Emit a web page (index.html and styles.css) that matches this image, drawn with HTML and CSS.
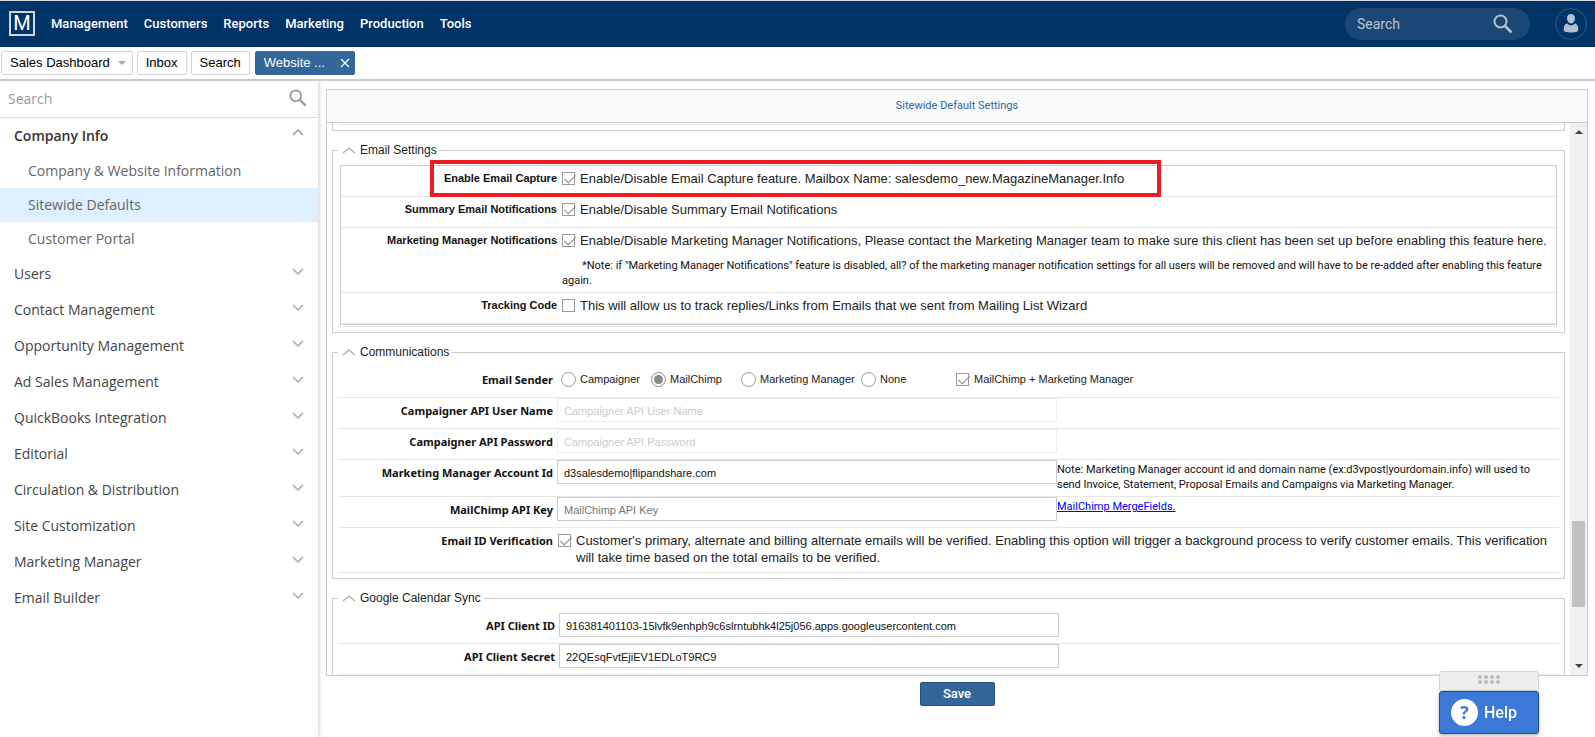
FILE: index.html
```html
<!DOCTYPE html>
<html lang="en">
<head>
<meta charset="utf-8">
<title>Sitewide Default Settings</title>
<link rel="stylesheet" href="styles.css">
</head>
<body>
<svg class="sprite" aria-hidden="true">
  <symbol id="magnifier" viewBox="0 0 20 20"><circle cx="7.5" cy="7.5" r="6" fill="none" stroke="currentColor" stroke-width="2"/><path d="M12 12l6.500 6.500" stroke="currentColor" stroke-width="2.500"/></symbol>
  <symbol id="down" viewBox="0 0 12 8"><path d="M1 1l5 5 5-5" fill="none" stroke="currentColor" stroke-width="1.800"/></symbol>
  <symbol id="up" viewBox="0 0 12 8"><path d="M1 7l5-5 5 5" fill="none" stroke="currentColor" stroke-width="1.800"/></symbol>
  <symbol id="peak" viewBox="0 0 14 8"><path d="M1 7l6-5 6 5" fill="none" stroke="currentColor" stroke-width="1.200"/></symbol>
</svg>

<header class="topbar">
  <a class="logo" href="#" aria-label="Home">M</a>
  <nav class="menu">
    <a href="#">Management</a><a href="#">Customers</a><a href="#">Reports</a><a href="#">Marketing</a><a href="#">Production</a><a href="#">Tools</a>
  </nav>
  <div class="top-search">
    <input type="text" placeholder="Search" aria-label="Search">
    <svg class="icon-20"><use href="#magnifier"/></svg>
  </div>
  <button class="avatar" aria-label="Account">
    <svg viewBox="0 0 16 20"><path d="M8 0c2.600 0 4.200 1.900 4 4.500C11.800 7.300 10.200 9.500 8 9.500S4.200 7.300 4 4.500C3.800 1.900 5.400 0 8 0z" fill="currentColor"/><path d="M4.300 9.500C5.500 10.800 6.600 11.300 8 11.300s2.500-.5 3.700-1.800C14 10 15.200 11.500 15.200 14v2.500c0 1-3 2-7.200 2s-7.200-1-7.200-2V14c0-2.500 1.200-4 3.500-4.500z" fill="currentColor"/></svg>
  </button>
</header>

<div class="tabs">
  <button class="tab">Sales Dashboard<span class="caret"></span></button>
  <button class="tab">Inbox</button>
  <button class="tab">Search</button>
  <button class="tab tab-active">Website ...<svg viewBox="0 0 10 10"><path d="M1 1l8 8M9 1l-8 8" stroke="currentColor" stroke-width="1.200"/></svg></button>
</div>

<div class="body">
  <aside class="sidebar">
    <div class="side-search">
      <input type="text" placeholder="Search" aria-label="Search settings">
      <svg class="icon-18"><use href="#magnifier"/></svg>
    </div>
    <nav class="side-nav">
      <a class="group group-open" href="#">Company Info<svg><use href="#up"/></svg></a>
      <a class="item" href="#">Company &amp; Website Information</a>
      <a class="item item-active" href="#">Sitewide Defaults</a>
      <a class="item" href="#">Customer Portal</a>
      <a class="group" href="#">Users<svg><use href="#down"/></svg></a>
      <a class="group" href="#">Contact Management<svg><use href="#down"/></svg></a>
      <a class="group" href="#">Opportunity Management<svg><use href="#down"/></svg></a>
      <a class="group" href="#">Ad Sales Management<svg><use href="#down"/></svg></a>
      <a class="group" href="#">QuickBooks Integration<svg><use href="#down"/></svg></a>
      <a class="group" href="#">Editorial<svg><use href="#down"/></svg></a>
      <a class="group" href="#">Circulation &amp; Distribution<svg><use href="#down"/></svg></a>
      <a class="group" href="#">Site Customization<svg><use href="#down"/></svg></a>
      <a class="group" href="#">Marketing Manager<svg><use href="#down"/></svg></a>
      <a class="group" href="#">Email Builder<svg><use href="#down"/></svg></a>
    </nav>
  </aside>

  <main class="main">
    <section class="panel">
      <h1 class="panel-title">Sitewide Default Settings</h1>
      <div class="panel-body">
        <div class="content">
          <fieldset class="set set-previous"><div class="rule"></div></fieldset>

          <fieldset class="set">
            <legend><svg><use href="#peak"/></svg>Email Settings</legend>
            <div class="email-table">
              <div class="email-row">
                <label for="capture">Enable Email Capture</label>
                <div><span class="check"><input type="checkbox" id="capture" checked><span>Enable/Disable Email Capture feature. Mailbox Name: salesdemo_new.MagazineManager.Info</span></span></div>
                <div class="highlight"></div>
              </div>
              <div class="email-row">
                <label for="summary">Summary Email Notifications</label>
                <div><span class="check"><input type="checkbox" id="summary" checked><span>Enable/Disable Summary Email Notifications</span></span></div>
              </div>
              <div class="email-row">
                <label for="notify">Marketing Manager Notifications</label>
                <div><span class="check"><input type="checkbox" id="notify" checked><span>Enable/Disable Marketing Manager Notifications, Please contact the Marketing Manager team to make sure this client has been set up before enabling this feature here.</span></span>
                <p class="note note-indent">*Note: if "Marketing Manager Notifications" feature is disabled, all? of the marketing manager notification settings for all users will be removed and will have to be re-added after enabling this feature again.</p></div>
              </div>
              <div class="email-row">
                <label for="tracking">Tracking Code</label>
                <div><span class="check"><input type="checkbox" id="tracking"><span>This will allow us to track replies/Links from Emails that we sent from Mailing List Wizard</span></span></div>
              </div>
            </div>
            <div class="rule"></div>
          </fieldset>

          <fieldset class="set">
            <legend><svg><use href="#peak"/></svg>Communications</legend>
            <div class="row row-sender">
              <span class="row-label">Email Sender</span>
              <div class="options">
                <label class="opt"><input type="radio" name="sender">Campaigner</label>
                <label class="opt"><input type="radio" name="sender" checked>MailChimp</label>
                <label class="opt opt-wide"><input type="radio" name="sender">Marketing Manager</label>
                <label class="opt opt-last"><input type="radio" name="sender">None</label>
                <label class="opt opt-check"><input type="checkbox" checked>MailChimp + Marketing Manager</label>
              </div>
            </div>
            <div class="row">
              <label class="row-label" for="api-user">Campaigner API User Name</label>
              <input class="field" type="text" id="api-user" placeholder="Campaigner API User Name" disabled>
            </div>
            <div class="row">
              <label class="row-label" for="api-pass">Campaigner API Password</label>
              <input class="field" type="text" id="api-pass" placeholder="Campaigner API Password" disabled>
            </div>
            <div class="row row-note">
              <label class="row-label" for="account">Marketing Manager Account Id</label>
              <input class="field" type="text" id="account" value="d3salesdemo|flipandshare.com">
              <p class="note">Note: Marketing Manager account id and domain name (ex:d3vpost|yourdomain.info) will used to send Invoice, Statement, Proposal Emails and Campaigns via Marketing Manager.</p>
            </div>
            <div class="row">
              <label class="row-label" for="mc-key">MailChimp API Key</label>
              <input class="field" type="text" id="mc-key" placeholder="MailChimp API Key">
              <p class="note"><a href="#">MailChimp MergeFields.</a></p>
            </div>
            <div class="row row-verify">
              <label class="row-label" for="verify">Email ID Verification</label>
              <div class="check verify"><input type="checkbox" id="verify" checked><span>Customer's primary, alternate and billing alternate emails will be verified. Enabling this option will trigger a background process to verify customer emails. This verification will take time based on the total emails to be verified.</span></div>
            </div>
          </fieldset>

          <fieldset class="set set-google">
            <legend><svg><use href="#peak"/></svg>Google Calendar Sync</legend>
            <div class="row">
              <label class="row-label" for="client-id">API Client ID</label>
              <input class="field" type="text" id="client-id" value="916381401103-15lvfk9enhph9c6slrntubhk4l25j056.apps.googleusercontent.com">
            </div>
            <div class="row">
              <label class="row-label" for="client-secret">API Client Secret</label>
              <input class="field" type="text" id="client-secret" value="22QEsqFvtEjiEV1EDLoT9RC9">
            </div>
          </fieldset>
        </div>
        <div class="scrollbar" aria-hidden="true">
          <span class="arrow arrow-up"></span>
          <span class="track"><span class="thumb"></span></span>
          <span class="arrow arrow-down"></span>
        </div>
      </div>
    </section>
    <footer class="actions"><button class="save">Save</button></footer>
  </main>
</div>

<div class="help">
  <div class="grip"><svg viewBox="0 0 24 10" fill="#bcbcbc"><circle cx="3" cy="2" r="2"/><circle cx="9" cy="2" r="2"/><circle cx="15" cy="2" r="2"/><circle cx="21" cy="2" r="2"/><circle cx="3" cy="7" r="2"/><circle cx="9" cy="7" r="2"/><circle cx="15" cy="7" r="2"/><circle cx="21" cy="7" r="2"/></svg></div>
  <button class="help-button"><span class="help-mark">?</span>Help</button>
</div>
</body>
</html>
```
FILE: styles.css
```css
* { box-sizing: border-box; }
html, body { height: 100%; }
body {
  margin: 0;
  display: flex;
  flex-direction: column;
  overflow: hidden;
  background: #fff;
  color: #222;
  font-family: "Liberation Sans", Arial, sans-serif;
  font-size: 13px;
}
button, input { font-family: inherit; }
p, h1 { margin: 0; font-weight: normal; }
a { text-decoration: none; color: inherit; }
.sprite { display: none; }

/* Top bar */
.topbar {
  flex: none;
  display: flex;
  align-items: center;
  height: 47px;
  padding: 0 8px 0 9px;
  border-top: 1px solid #d5dbe0;
  background: #003366;
  color: #fff;
  font-family: Roboto, sans-serif;
}
.logo {
  display: flex;
  align-items: center;
  justify-content: center;
  width: 26px;
  height: 25px;
  margin-bottom: 2px;
  border: 2px solid #ccd6e0;
  font: 20px/20px Roboto, sans-serif;
}
.menu {
  display: flex;
  flex: 1;
  gap: 16px;
  margin-left: 16px;
  font-size: 13px;
  font-weight: 500;
  line-height: 20px;
}
.top-search {
  display: flex;
  align-items: center;
  width: 185px;
  height: 32px;
  padding: 0 17px 0 12px;
  border-radius: 16px;
  background: #1a4775;
  color: #b0c0d0;
}
.top-search input {
  flex: 1;
  min-width: 0;
  padding: 0;
  border: 0;
  background: none;
  color: #fff;
  font-size: 14px;
}
.top-search input::placeholder { color: #b8c6d4; }
.icon-20 { width: 20px; height: 20px; }
.icon-18 { width: 18px; height: 18px; }
.avatar {
  display: flex;
  align-items: center;
  justify-content: center;
  width: 32px;
  height: 32px;
  margin-left: 25px;
  padding: 0;
  border: 1px solid #2c5780;
  border-radius: 50%;
  background: none;
  color: #b0c0d0;
}
.avatar svg { width: 16px; height: 20px; }

/* Tabs */
.tabs {
  flex: none;
  display: flex;
  gap: 4px;
  height: 34px;
  padding: 4px 1px;
  border-bottom: 2px solid #ccc;
}
.tab {
  display: flex;
  align-items: center;
  height: 24px;
  padding: 0 8px;
  border: 1px solid #d6d6d6;
  border-radius: 2px;
  background: #fff;
  color: #000;
  font-size: 13px;
  line-height: 20px;
}
.tab-active {
  margin-left: 1px;
  padding: 0 4px 0 8px;
  border-color: #336699;
  background: #336699;
  color: #fff;
}
.tab-active svg { width: 10px; height: 10px; margin-left: 15px; }
.caret {
  margin: 0 -2px 0 8px;
  border: 4px solid transparent;
  border-top-color: #aaa;
  border-bottom: 0;
}

/* Sidebar */
.body { flex: 1; display: flex; min-height: 0; }
.sidebar {
  flex: none;
  width: 318px;
  box-shadow: 1px 0 4px #ccc;
  font-family: "Open Sans", sans-serif;
  font-size: 14px;
}
.side-search {
  display: flex;
  align-items: center;
  height: 37px;
  padding: 0 11px 2px 8px;
  border-bottom: 1px solid #ddd;
  color: #999;
}
.side-search input {
  flex: 1;
  padding: 0;
  border: 0;
  font-size: 14px;
}
.side-search input::placeholder { color: #999; }
.group {
  display: flex;
  align-items: center;
  justify-content: space-between;
  height: 36px;
  padding: 0 14px 2px;
  color: #444;
}
.group-open { font-weight: 600; color: #333; }
.group svg { width: 12px; height: 8px; color: #bbb; margin-bottom: 2px; }
.group-open svg { margin-bottom: 6px; color: #aaa; }
.item {
  display: flex;
  align-items: center;
  height: 34px;
  padding: 0 28px 2px;
  color: #666;
}
.item-active { background: #def0ff; }

/* Panel */
.main {
  flex: 1;
  display: flex;
  flex-direction: column;
  min-width: 0;
  padding: 8px 7px 0 8px;
}
.panel {
  flex: 1;
  display: flex;
  flex-direction: column;
  min-height: 0;
  border: 1px solid #ccc;
}
.panel-title {
  flex: none;
  height: 33px;
  border-bottom: 1px solid #ccc;
  background: #f9fafc;
  color: #336699;
  font: 11px/32px Roboto, sans-serif;
  text-align: center;
}
.panel-body { flex: 1; display: flex; min-height: 0; }
.content { flex: 1; min-width: 0; overflow: hidden; padding: 0 5px; }

.set {
  min-width: 0;
  margin: 0 0 11px;
  padding: 0 5px 5px;
  border: 1px solid #ccc;
}
.set-previous { padding-top: 1px; border-top: 0; }
.set legend {
  display: flex;
  align-items: center;
  gap: 4px;
  height: 16px;
  padding: 0 3px 0 4px;
  font-size: 12px;
  line-height: 16px;
}
.set legend svg { width: 14px; height: 8px; color: #aaa; }
.rule { height: 1px; background: #e8e8e8; }

.email-table {
  margin: 7px 2px 1px;
  border: 1px solid #ccc;
}
.email-row {
  position: relative;
  display: grid;
  grid-template-columns: 221px 1fr;
  min-height: 31px;
  padding-top: 4px;
  padding-right: 7px;
  border-bottom: 1px solid #e8e8e8;
  line-height: 17px;
}
.email-row > label {
  padding-right: 5px;
  color: #111;
  font-size: 11px;
  font-weight: bold;
  text-align: right;
}
.highlight {
  position: absolute;
  top: -6px;
  left: 89px;
  width: 731px;
  height: 37px;
  border: 4px solid #ed1c24;
}
.check { display: flex; gap: 5px; }
.check > span { flex: 1; }

input[type="checkbox"], input[type="radio"] {
  appearance: none;
  flex: none;
  margin: 0;
  border: 1px solid #999;
  background: #fff;
}
input[type="checkbox"] { width: 13px; height: 13px; margin-top: 2px; }
input[type="checkbox"]:checked::before {
  content: "";
  display: block;
  width: 5px;
  height: 10px;
  margin: -1px 0 0 4px;
  border: solid #888;
  border-width: 0 1px 1px 0;
  transform: rotate(45deg);
}
input[type="radio"] { width: 15px; height: 15px; border-radius: 50%; }
input[type="radio"]:checked {
  border: 1px solid #888;
  background: #888 content-box;
  padding: 2px;
}

.note {
  padding-top: 2px;
  color: #111;
  font: 11px/15px Roboto, sans-serif;
}
.note a { color: #00f; text-decoration: underline; }
.note-indent { padding: 9px 0 4px; text-indent: 20px; }

.row {
  display: grid;
  grid-template-columns: 219px 500px 1fr;
  align-items: start;
  min-height: 31px;
  border-bottom: 1px solid #e8e8e8;
}
.row-label {
  padding-right: 4px;
  color: #111;
  font: bold 11px/26px "Noto Sans", sans-serif;
  text-align: right;
}
.row-sender { min-height: 38px; padding-top: 7px; grid-template-columns: 219px 1fr; }
.row-note { min-height: 37px; grid-template-columns: 219px 500px 490px; }
.row-verify { min-height: 45px; grid-template-columns: 219px 1fr; }
.options { display: flex; font-size: 11px; padding: 4px 0 0 4px; }
.opt { display: flex; align-items: center; gap: 4px; width: 90px; height: 16px; white-space: nowrap; }
.opt-wide { width: 120px; }
.opt-last { width: 95px; }
.opt-check { width: auto; gap: 5px; }
.opt-check input[type="checkbox"] { margin-top: 0; }
.verify { padding: 4px 10px 0 1px; line-height: 17px; }
.field {
  width: 100%;
  height: 24px;
  padding: 2px 6px 0;
  border: 1px solid #ccc;
  background: #fff;
  color: #111;
  font-size: 11px;
}
.field::placeholder { color: #757575; }
.field:disabled { border-color: #eee; }
.field:disabled::placeholder { color: #ccc; }
.set-google .row { grid-template-columns: 221px 500px 1fr; }
.set-google legend { margin-bottom: 7px; }

/* Scrollbar */
.scrollbar {
  flex: none;
  display: flex;
  flex-direction: column;
  align-items: center;
  width: 17px;
  background: #f0f0f0;
}
.arrow { margin: 7px 0; border: 4px solid transparent; }
.arrow-up { border-bottom-color: #444; border-top: 0; }
.arrow-down { border-top-color: #444; border-bottom: 0; }
.track { flex: 1; display: flex; align-items: flex-end; padding-bottom: 50px; }
.thumb { width: 13px; height: 86px; background: #c1c1c1; }

/* Actions and help */
.actions { flex: none; display: flex; justify-content: center; height: 61px; padding-top: 6px; }
.save {
  width: 75px;
  height: 24px;
  padding: 0;
  border: 1px solid #27507a;
  border-radius: 2px;
  background: #336699;
  color: #fff;
  font: 500 13px/20px Roboto, sans-serif;
}
.help { position: fixed; right: 56px; bottom: 3px; width: 100px; }
.grip {
  display: flex;
  justify-content: center;
  height: 20px;
  padding-top: 3px;
  border: 1px solid #d4d4d4;
  border-radius: 3px 3px 0 0;
  background: #eee;
}
.grip svg { width: 24px; height: 10px; }
.help-button {
  display: flex;
  align-items: center;
  gap: 6px;
  width: 100%;
  height: 43px;
  padding: 0 11px;
  border: 1px solid #2a4d78;
  border-radius: 3px;
  background: #3c78d8;
  box-shadow: 0 2px 4px #bbb;
  color: #fff;
  font: 500 16px/20px Roboto, sans-serif;
}
.help-mark {
  width: 27px;
  height: 27px;
  border-radius: 50%;
  background: #fff;
  color: #3c78d8;
  font: bold 18px/27px "Open Sans", sans-serif;
  text-align: center;
}
```
